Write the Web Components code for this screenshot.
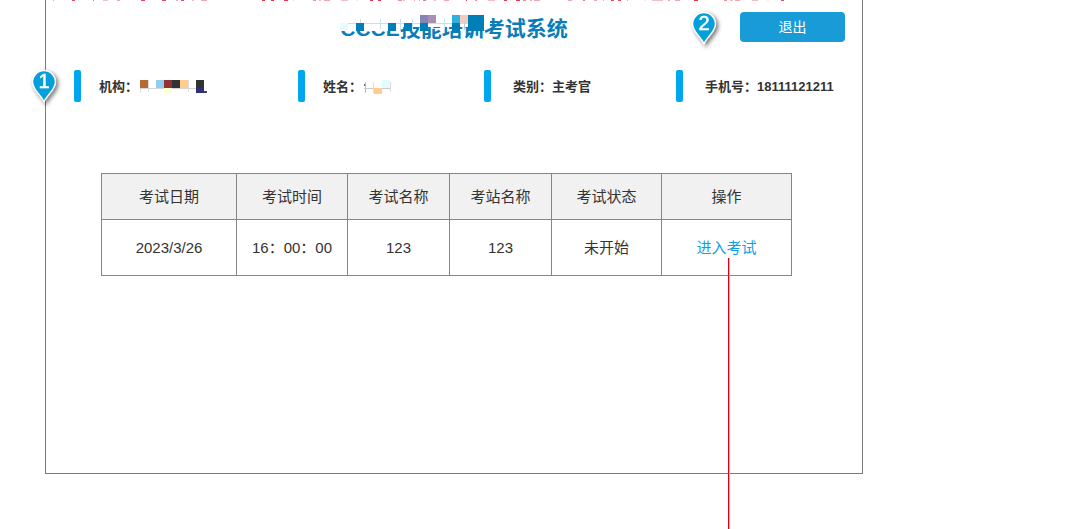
<!DOCTYPE html>
<html lang="zh-CN">
<head>
<meta charset="utf-8">
<title>技能培训考试系统</title>
<style>
body { margin: 0; background: #fff; color: #333; font-family: "Liberation Sans", "Noto Sans CJK SC", sans-serif; }
</style>
</head>
<body>
<exam-page></exam-page>
<script>
class Base extends HTMLElement {
  connectedCallback() {
    if (this.shadowRoot) return;
    this.attachShadow({ mode: 'open' }).innerHTML = this.render();
  }
}

// Cut-off remark above the frame: [x, width, strength] of each visible stroke end
const STROKES = [[53,1,4],[72,3,8],[93,1,6],[103,5,3],[117,3,4],[141,4,8],[162,4,8],[176,2,4],[181,3,8],[192,2,3],[201,6,4],[262,3,9],[271,3,9],[280,1,1],[284,4,9],[293,1,2],[313,3,5],[319,2,3],[324,6,4],[341,7,3],[356,2,1],[370,3,9],[378,3,9],[398,4,5],[403,2,3],[414,1,4],[419,1,4],[423,3,6],[434,2,3],[444,5,4],[466,1,8],[475,2,5],[488,7,3],[504,3,9],[516,4,9],[523,3,5],[530,2,4],[534,6,4],[568,4,4],[583,2,6],[594,3,4],[603,1,4],[611,3,8],[618,3,8],[627,1,4],[644,2,1],[652,11,3],[668,2,4],[675,5,4],[694,4,9],[724,3,5],[730,3,3],[735,5,4],[752,6,3],[767,2,1],[781,3,8]];

customElements.define('cut-remark', class extends Base {
  render() {
    return `<style>:host{position:absolute;top:0;left:0}svg{display:block}</style>
    <svg width="800" height="1" aria-hidden="true" shape-rendering="crispEdges">${
      STROKES.map(([x, w, o]) => `<rect x="${x}" width="${w}" height="1" fill="#e0213c" opacity="${o / 10}"/>`).join('')}</svg>`;
  }
});

customElements.define('map-pin', class extends Base {
  render() {
    return `<style>:host{display:block;position:absolute}svg{display:block;overflow:visible;filter:drop-shadow(2px 2px 2px #0008)}
    text{font:20px "Liberation Sans",sans-serif;fill:#fff;stroke:#fff;stroke-width:.5}</style>
    <svg width="26" height="34" viewBox="0 0 26 34">
      <path d="M13 32 C10 25 1.5 20 1.5 12 A11.2 11.2 0 0 1 24.5 12 C24.5 20 16 25 13 32Z" fill="#059fdb" stroke="#fff" stroke-width="1.5"/>
      <text x="13" y="18" text-anchor="middle">${this.getAttribute('number')}</text>
    </svg>`;
  }
});

customElements.define('pixel-mask', class extends Base {
  render() {
    const cells = JSON.parse(this.getAttribute('cells'));
    const w = this.getAttribute('width'), h = this.getAttribute('height');
    return `<style>:host{display:block}svg{display:block}</style>
    <svg width="${w}" height="${h}" shape-rendering="crispEdges" aria-hidden="true">${
      cells.map(([x, y, cw, ch, c]) => `<rect x="${x}" y="${y}" width="${cw}" height="${ch}" fill="${c}"/>`).join('')}</svg>`;
  }
});

customElements.define('exam-header', class extends Base {
  render() {
    const b = '#007eb8';
    const cells = [[0,0,60,17,'#fff'],[60,0,90,13,'#fff'],[0,9,8,7,'#e6fcff'],[8,9,136,1,'#c4e3f0'],[20,5,1,10,'#c4e3f0'],[40,5,1,10,'#c4e3f0'],[60,5,1,10,'#c4e3f0'],[72,5,1,10,'#c4e3f0'],[104,5,1,10,'#c4e3f0'],[124,4,1,12,'#a9d5e8'],
      [16,9,8,8,b],[48,9,8,8,b],[64,9,8,8,b],[80,9,8,8,b],[80,1,8,8,'#8484b6'],[88,1,8,8,'#a88fb5'],[112,1,8,8,'#30b0e0'],[112,9,8,8,b],[120,1,8,8,'#f0cdc0'],[128,1,16,8,b],[128,9,8,8,b],[136,9,8,8,b]];
    return `<style>
      :host{display:grid;grid-template-columns:1fr auto 1fr;padding:12px 17px 0;position:relative}
      h1{margin:0;font-size:21px;line-height:34px;font-weight:bold;color:#0a7db8;position:relative;white-space:nowrap}
      pixel-mask{position:absolute;left:0;top:2px}
      .end{justify-self:end;position:relative;display:flex;align-items:start}
      button{width:105px;height:30px;border:0;border-radius:4px;background:#189bd7;color:#fff;font:14px/20px "Liberation Sans","Noto Sans CJK SC",sans-serif;padding:0}
      map-pin{right:128px;top:0}
    </style>
    <span></span>
    <h1>CCCE技能培训考试系统<pixel-mask width="150" height="17" cells='${JSON.stringify(cells)}'></pixel-mask></h1>
    <div class="end"><map-pin number="2"></map-pin><button type="button">退出</button></div>`;
  }
});

customElements.define('info-item', class extends Base {
  render() {
    return `<style>
      :host{display:flex;align-items:center;height:32px;gap:var(--gap,18px);font-size:13px;font-weight:bold;line-height:20px;white-space:nowrap}
      :host::before{content:"";width:7px;height:32px;border-radius:2px;background:#00a7ee}
      div{display:flex;align-items:center;padding-top:2px}
    </style><div><span>${this.getAttribute('label')}：</span><slot></slot></div>`;
  }
});

customElements.define('examiner-info', class extends Base {
  render() {
    const org = [[0,0,8,8,'#b26c32'],[0,8,58,1,'#d5d5d5'],[0,8,1,5,'#ddd'],[8,0,1,12,'#ddd'],[16,0,8,8,'#8fceed'],[24,0,8,8,'#913335'],[32,0,8,8,'#333'],[40,0,8,8,'#ffcc8d'],[24,8,8,5,'#ffffcf'],[48,0,1,12,'#ddd'],[56,0,8,8,'#333'],[56,8,8,5,'#303174'],[64,11,3,2,'#40406f']];
    const name = [[0,4,2,2,'#666'],[1,2,1,11,'#e5b278'],[0,8,27,1,'#c9c9c9'],[9,2,1,11,'#ddd'],[10,8,8,6,'#ffcc8d'],[18,0,8,8,'#e3fcff'],[26,2,1,10,'#ddd']];
    return `<style>
      :host{display:grid;grid-template-columns:224fr 186fr 192fr 163fr;margin:24px 23px 0 28px;position:relative}
      .wide{--gap:22px}
      pixel-mask{margin-left:2px}
      map-pin{left:-43px;top:0}
    </style>
    <map-pin number="1"></map-pin>
    <info-item label="机构"><pixel-mask width="67" height="14" cells='${JSON.stringify(org)}'></pixel-mask></info-item>
    <info-item label="姓名"><pixel-mask width="27" height="14" cells='${JSON.stringify(name)}'></pixel-mask></info-item>
    <info-item class="wide" label="类别">主考官</info-item>
    <info-item class="wide" label="手机号">18111121211</info-item>`;
  }
});

customElements.define('exam-table', class extends Base {
  render() {
    const widths = [135, 111, 102, 102, 110, 130];
    return `<style>
      :host{display:block;margin:71px 70px 0 55px}
      table{width:100%;border-collapse:collapse;table-layout:fixed;font-size:15px;line-height:20px;text-align:center}
      th,td{border:1px solid #868686;padding:0;font-weight:normal}
      th{background:#f1f1f1;height:45px}
      td{height:55px}
      .action{position:relative}
      a{color:#0d9fe6;text-decoration:none}
      .lead{position:absolute;top:38px;left:calc(50% + 1px);width:1px;height:100vh;background:#d8001b;box-shadow:1px 0 #f0a8b0}
    </style>
    <table>
      <colgroup>${widths.map(w => `<col style="width:${w / 6.9}%">`).join('')}</colgroup>
      <thead><tr><th>考试日期</th><th>考试时间</th><th>考试名称</th><th>考站名称</th><th>考试状态</th><th>操作</th></tr></thead>
      <tbody><tr><td>2023/3/26</td><td>16：00：00</td><td>123</td><td>123</td><td>未开始</td><td class="action"><a href="#exam">进入考试</a><span class="lead"></span></td></tr></tbody>
    </table>`;
  }
});

customElements.define('exam-page', class extends Base {
  render() {
    return `<style>
      :host{display:block;position:relative;min-height:100vh;overflow:hidden}
      main{margin:0 211px 0 45px;padding-bottom:197px;border:1px solid #7b7b7b;border-top:0}
    </style>
    <cut-remark></cut-remark>
    <main><exam-header></exam-header><examiner-info></examiner-info><exam-table></exam-table></main>`;
  }
});
</script>
</body>
</html>
